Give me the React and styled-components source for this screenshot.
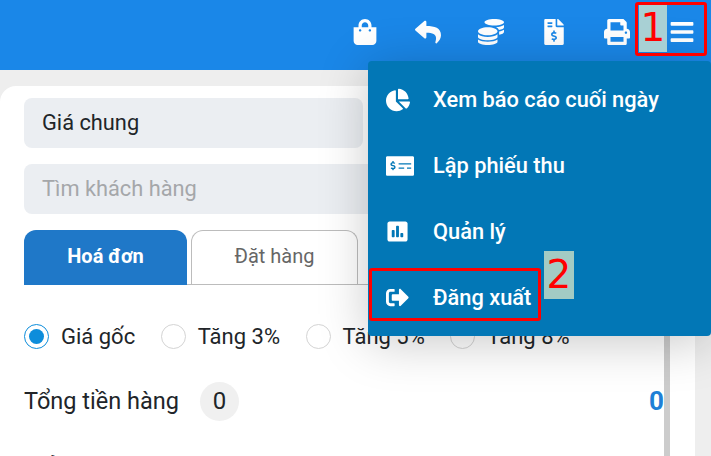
import React from 'react';
import styled, { createGlobalStyle } from 'styled-components';
import {
  FaShoppingBag,
  FaReply,
  FaCoins,
  FaFileInvoiceDollar,
  FaPrint,
  FaBars,
  FaChartPie,
  FaMoneyCheckAlt,
  FaPoll,
  FaSignOutAlt,
} from 'react-icons/fa';

const GlobalStyle = createGlobalStyle`
  html, body {
    margin: 0;
    height: 100%;
    overflow: hidden;
    background: #eeeeee;
    font-family: Roboto, "Liberation Sans", sans-serif;
  }
  * {
    box-sizing: border-box;
  }
`;

const Page = styled.div`
  position: relative;
  width: 711px;
  height: 456px;
  overflow: hidden;
`;

const Header = styled.header`
  display: flex;
  justify-content: flex-end;
  align-items: flex-start;
  height: 70px;
  padding: 19px 16px 0 0;
  background: #1a87e8;
`;

const HeaderIcon = styled.button`
  display: flex;
  justify-content: center;
  width: 63px;
  padding: 0;
  border: 0;
  background: none;
  color: #fff;
  font-size: 26px;
`;

const BarsButton = styled(HeaderIcon)`
  width: 26px;
  margin-left: 21px;
`;

const Main = styled.main`
  padding-top: 16px;
`;

const Card = styled.section`
  width: 695px;
  height: 370px;
  background: #fff;
  border-top-left-radius: 16px;
`;

const Content = styled.div`
  width: 670px;
  height: 100%;
  padding: 12px 0 0 24px;
  border-right: 6px solid #cccccc;
`;

const Field = styled.div`
  display: flex;
  align-items: center;
  width: ${props => props.width || '100%'};
  height: 50px;
  margin-bottom: 16px;
  padding: 0 0 2px 18px;
  border-radius: 8px;
  background: #ebeef2;
  font-size: 21.8px;
  color: ${props => (props.placeholder ? '#a5a7aa' : '#212529')};
`;

const Tabs = styled.div`
  display: flex;
  gap: 4px;
  height: 55px;
  border-bottom: 1px solid #bcbcbc;
`;

const Tab = styled.div`
  display: flex;
  justify-content: center;
  align-items: center;
  width: ${props => (props.active ? '163px' : '167px')};
  height: ${props => (props.active ? '55px' : '54px')};
  padding-bottom: 3px;
  border: ${props => (props.active ? '0' : '1px solid #bcbcbc')};
  border-bottom: 0;
  border-radius: 12px 12px 0 0;
  background: ${props => (props.active ? '#1f78c8' : '#fff')};
  color: ${props => (props.active ? '#fff' : '#666666')};
  font-size: 20px;
  font-weight: ${props => (props.active ? 700 : 400)};
`;

const RadioRow = styled.div`
  display: flex;
  align-items: center;
  gap: 25.5px;
  height: 24px;
  margin-top: 39px;
`;

const RadioOption = styled.label`
  display: flex;
  align-items: center;
  gap: 12px;
  font-size: 22px;
  color: #212529;
`;

const RadioCircle = styled.span`
  display: flex;
  justify-content: center;
  align-items: center;
  width: 25px;
  height: 25px;
  border-radius: 50%;
  border: 1px solid ${props => (props.checked ? '#0d8ddb' : '#d4d4d4')};
  background: #fff;
  &::after {
    content: '';
    display: ${props => (props.checked ? 'block' : 'none')};
    width: 15px;
    height: 15px;
    border-radius: 50%;
    background: #0d8ddb;
  }
`;

const TotalRow = styled.div`
  display: flex;
  align-items: center;
  height: 40px;
  margin-top: 33px;
  font-size: 23.5px;
  color: #212529;
`;

const Count = styled.span`
  display: flex;
  justify-content: center;
  align-items: center;
  width: 39px;
  height: 39px;
  margin-left: 21px;
  border-radius: 50%;
  background: #f0f0f0;
  font-size: 24px;
`;

const TotalValue = styled.span`
  margin-left: auto;
  font-size: 26px;
  font-weight: 700;
  color: #1f7fd6;
`;

const NextRow = styled.div`
  margin-top: 32px;
  font-size: 23.5px;
  color: #212529;
`;

const Menu = styled.nav`
  position: absolute;
  top: 61px;
  left: 368px;
  width: 343px;
  height: 275px;
  padding-top: 6px;
  border-radius: 4px;
  background: #0277b6;
  box-shadow: 0 6px 50px rgba(0, 0, 0, 0.22);
`;

const MenuItem = styled.a`
  display: flex;
  align-items: center;
  height: 66px;
  padding: 0 0 1px 18px;
  color: #fff;
  font-size: 21.8px;
  font-weight: 500;
`;

const MenuIcon = styled.span`
  display: flex;
  align-items: center;
  width: 47px;
  font-size: ${props => props.size}px;
`;

const Callout = styled.div`
  position: absolute;
  top: ${props => props.top}px;
  left: ${props => props.left}px;
  width: ${props => props.width}px;
  height: ${props => props.height}px;
  border: 3px solid #ff0000;
  border-radius: 3px;
`;

const Badge = styled.div`
  position: absolute;
  top: ${props => props.top}px;
  left: ${props => props.left}px;
  display: flex;
  justify-content: center;
  align-items: center;
  width: ${props => props.width}px;
  height: ${props => props.height}px;
  padding-bottom: 2px;
  background: ${props => props.color};
  color: #ff0000;
  font-family: "DejaVu Sans", sans-serif;
  font-size: 39px;
`;

const menuItems = [
  { icon: <FaChartPie />, size: 24, label: 'Xem báo cáo cuối ngày' },
  { icon: <FaMoneyCheckAlt />, size: 28, label: 'Lập phiếu thu' },
  { icon: <FaPoll />, size: 23, label: 'Quản lý' },
  { icon: <FaSignOutAlt />, size: 23, label: 'Đăng xuất' },
];

const prices = ['Giá gốc', 'Tăng 3%', 'Tăng 5%', 'Tăng 8%'];

function App() {
  return (
    <Page>
      <GlobalStyle />

      <Header>
        <HeaderIcon><FaShoppingBag /></HeaderIcon>
        <HeaderIcon><FaReply /></HeaderIcon>
        <HeaderIcon><FaCoins /></HeaderIcon>
        <HeaderIcon><FaFileInvoiceDollar /></HeaderIcon>
        <HeaderIcon><FaPrint /></HeaderIcon>
        <BarsButton><FaBars /></BarsButton>
      </Header>

      <Main>
        <Card>
          <Content>
            <Field width="339px">Giá chung</Field>
            <Field placeholder="true">Tìm khách hàng</Field>
            <Tabs>
              <Tab active>Hoá đơn</Tab>
              <Tab>Đặt hàng</Tab>
            </Tabs>
            <RadioRow>
              {prices.map((price, i) => (
                <RadioOption key={price}>
                  <RadioCircle checked={i === 0} />
                  {price}
                </RadioOption>
              ))}
            </RadioRow>
            <TotalRow>
              Tổng tiền hàng
              <Count>0</Count>
              <TotalValue>0</TotalValue>
            </TotalRow>
            <NextRow>Giảm giá</NextRow>
          </Content>
        </Card>
      </Main>

      <Menu>
        {menuItems.map(item => (
          <MenuItem key={item.label}>
            <MenuIcon size={item.size}>{item.icon}</MenuIcon>
            {item.label}
          </MenuItem>
        ))}
      </Menu>

      <Callout top={2} left={635} width={72} height={54} />
      <Badge top={5} left={639} width={28} height={47} color="#a8d0d4">1</Badge>
      <Callout top={268} left={369} width={172} height={53} />
      <Badge top={251} left={544} width={30} height={48} color="#a3cbc4">2</Badge>
    </Page>
  );
}

export default App;
